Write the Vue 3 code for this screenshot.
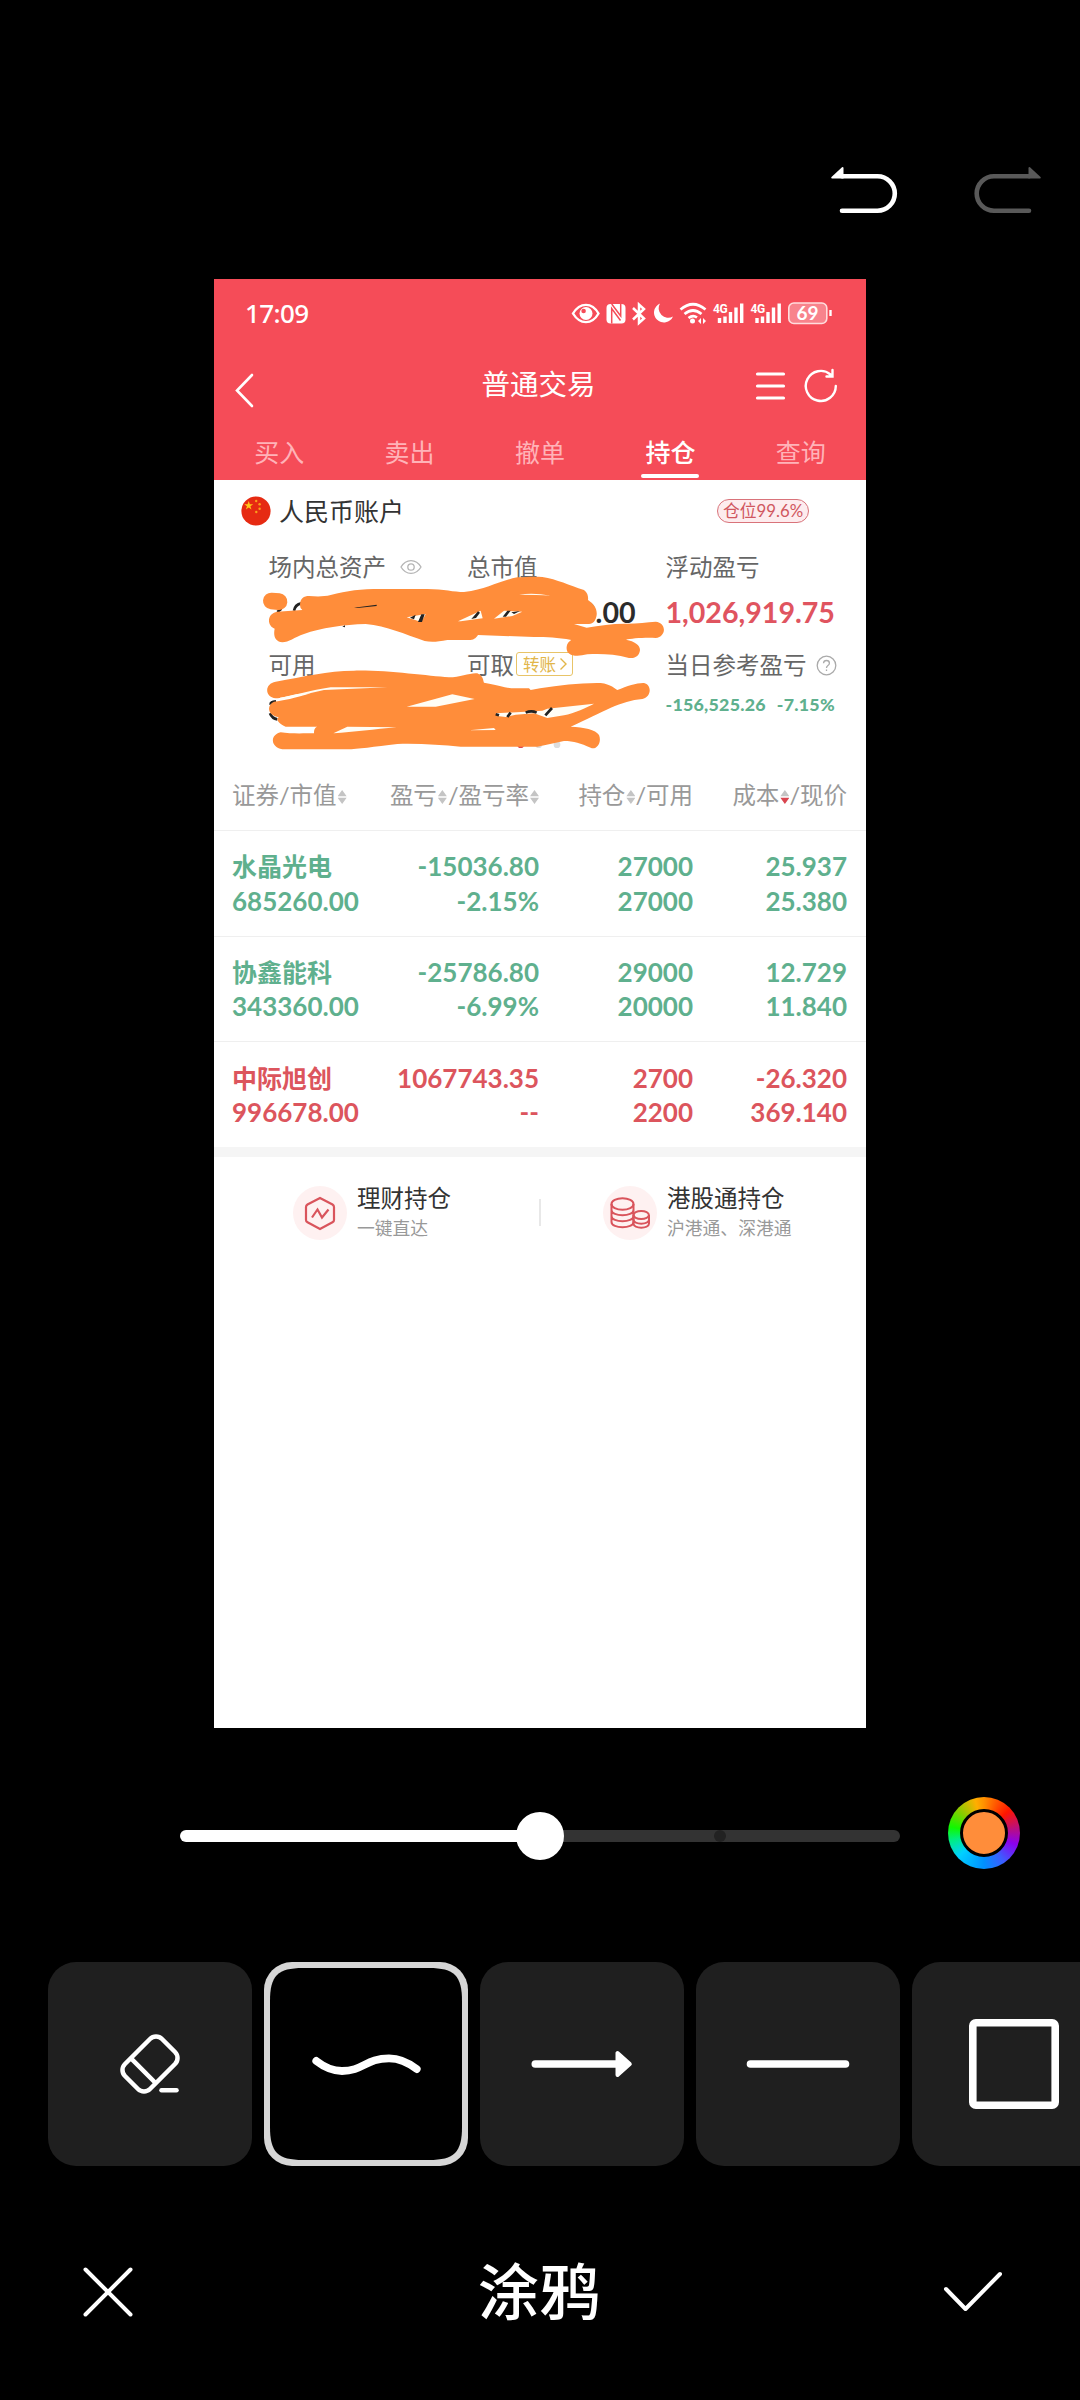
<script setup>
const tabs = ['买入', '卖出', '撤单', '持仓', '查询']
const holdings = [
  { tone: 'down', name: '水晶光电', value: '685260.00', pl: '-15036.80', rate: '-2.15%', qty: '27000', avail: '27000', cost: '25.937', price: '25.380' },
  { tone: 'down', name: '协鑫能科', value: '343360.00', pl: '-25786.80', rate: '-6.99%', qty: '29000', avail: '20000', cost: '12.729', price: '11.840' },
  { tone: 'up', name: '中际旭创', value: '996678.00', pl: '1067743.35', rate: '--', qty: '2700', avail: '2200', cost: '-26.320', price: '369.140' },
]
</script>

<template>
  <div class="editor">
    <div class="history">
      <svg class="undo" width="68" height="52" viewBox="0 0 68 52">
        <path d="M12 11.2H47.500A17.3 17.3 0 0 1 47.500 45.8H12" fill="none" stroke="#fff" stroke-width="4.6" stroke-linecap="round" />
        <path d="M1.5 12L12 2.2Q13.500 1.500 13.500 3.500V13.500H2Q0.500 13.200 1.500 12Z" fill="#fff" />
      </svg>
      <svg width="68" height="52" viewBox="0 0 68 52">
        <path d="M55 11.2H20A17.3 17.3 0 0 0 20 45.800H55" fill="none" stroke="#595959" stroke-width="4.600" stroke-linecap="round" />
        <path d="M66.500 12L56 2.200Q54.500 1.500 54.500 3.500V13.500H66Q67.500 13.200 66.500 12Z" fill="#595959" />
      </svg>
    </div>

    <div class="canvas">
      <header class="top">
        <div class="status">
          <span class="clock">17:09</span>
          <svg width="264" height="28" viewBox="570 300 264 28" fill="none" stroke="#fff" stroke-width="2">
            <path d="M573 313.500C580 302 592 302 598.500 313.500C592 325 580 325 573 313.500Z" stroke-width="2.400" />
            <circle cx="586" cy="313.500" r="6.500" fill="#fff" stroke="none" /><circle cx="583.600" cy="311" r="2.300" fill="#f54c58" stroke="none" />
            <rect x="606.500" y="304" width="19" height="19.500" rx="4" fill="#fff" stroke="none" />
            <path d="M611.700 323.500V308.500L620.500 320.500M611.700 304L620.700 316V304" stroke="#f54c58" stroke-width="1.500" />
            <path d="M633 308L644 318.500L639 323V304.500L644 309L633 319.500" stroke-width="2.500" />
            <path d="M660 303.500A9.900 9.900 0 1 0 673 316.500A9.500 9.500 0 0 1 660 303.500Z" fill="#fff" stroke="none" />
            <path d="M680.500 309.500Q693 299 705.500 309.500M684.500 314Q693 307 701.500 314M688.500 318Q693 314.500 697 317.500" stroke-width="2.700" />
            <circle cx="692.500" cy="321" r="2.500" fill="#fff" stroke="none" /><path d="M698 321L701 318V324ZM706 321L703 318V324Z" fill="#fff" stroke="none" />
            <g fill="#fff" stroke="none">
              <text x="713" y="312.500" class="net">4G</text><text x="750.500" y="312.500" class="net">4G</text>
            </g>
            <path d="M719.500 318V323M725 316.500V323M730.500 312V323M736 307.500V323M741.700 303.500V323M757 318V323M762.500 316.500V323M768 312V323M773.500 307.500V323M779.200 303.500V323" stroke-width="3.400" />
            <rect x="788.800" y="303" width="38" height="20.500" rx="5" fill="#f8838c" stroke="#fdd" stroke-width="1.600" />
            <path d="M830.500 310V316" stroke-width="2.400" />
            <text x="807.500" y="320" text-anchor="middle" class="batt">69</text>
          </svg>
        </div>
        <div class="nav">
          <svg class="back" width="22" height="36" viewBox="0 0 22 36"><path d="M18 2L3 17.500L18 33" fill="none" stroke="#fff" stroke-width="2.600" stroke-linecap="round" /></svg>
          <h1>普通交易</h1>
          <svg class="acts" width="86" height="38" viewBox="753 367 86 38" fill="none" stroke="#fff" stroke-linecap="round">
            <path d="M757.500 374H783.500M757.500 386H783.500M757.500 398H783.500" stroke-width="3.200" />
            <path d="M835.800 386A15 15 0 1 1 830.500 374.500M832.500 370V376.500H826.500" stroke-width="2.400" />
          </svg>
        </div>
        <nav class="tabs">
          <span v-for="(t, i) in tabs" :key="t" :class="{ on: i === 3 }">{{ t }}</span>
        </nav>
      </header>

      <section class="account">
        <div class="acct">
          <svg width="30" height="30" viewBox="0 0 30 30">
            <circle cx="15" cy="15" r="14.600" fill="#e62a12" />
            <path d="M7.700 5L8.800 8.300H12.200L9.400 10.300L10.500 13.500L7.700 11.500L4.900 13.500L6 10.300L3.200 8.300H6.600Z" fill="#ffc61a" />
            <g fill="#f9a01b"><circle cx="15.200" cy="5" r="1.200" /><circle cx="18.600" cy="8.300" r="1.200" /><circle cx="18.600" cy="12.700" r="1.200" /><circle cx="15.300" cy="16" r="1.200" /></g>
          </svg>
          <b>人民币账户</b>
          <span class="pill">仓位99.6%</span>
        </div>
        <div class="stats">
          <div class="cell">
            <div class="lab"><span>场内总资产</span>
              <svg class="eye" width="22" height="16" viewBox="0 0 22 16" fill="none" stroke="#b5b5b5" stroke-width="1.300"><path d="M1 8C6 -0.500 16 -0.500 21 8C16 16.500 6 16.500 1 8Z" /><circle cx="11" cy="8" r="3.200" /></svg>
            </div>
          </div>
          <div class="cell">
            <div class="lab"><span>总市值</span></div>
            <div class="num mv">0.00</div>
          </div>
          <div class="cell">
            <div class="lab"><span>浮动盈亏</span></div>
            <div class="num red">1,026,919.75</div>
          </div>
          <div class="cell"><div class="lab"><span>可用</span></div></div>
          <div class="cell">
            <div class="lab"><span>可取</span><span class="move">转账<svg width="9" height="14" viewBox="0 0 9 14"><path d="M1.500 1.500L7 7L1.500 12.500" fill="none" stroke="#e2b64a" stroke-width="1.400" /></svg></span></div>
          </div>
          <div class="cell">
            <div class="lab"><span>当日参考盈亏</span>
              <svg class="ask" width="21" height="21" viewBox="0 0 21 21" fill="none" stroke="#aaa" stroke-width="1.300"><circle cx="10.500" cy="10.500" r="9.300" /><path d="M7.500 8.300Q7.700 5.500 10.500 5.500T13.400 8.200Q13.400 9.500 11.900 10.500T10.500 13M10.500 14.500V16" /></svg>
            </div>
            <div class="day"><span>-156,525.26</span><span>-7.15%</span></div>
          </div>
        </div>
      </section>

      <section class="table">
        <div class="row head">
          <span>证券/市值<i class="sort"></i></span>
          <span>盈亏<i class="sort"></i>/盈亏率<i class="sort"></i></span>
          <span>持仓<i class="sort"></i>/可用</span>
          <span>成本<i class="sort hot"></i>/现价</span>
        </div>
        <div v-for="h in holdings" :key="h.name" class="row item" :class="h.tone">
          <span><em>{{ h.name }}</em><br>{{ h.value }}</span>
          <span>{{ h.pl }}<br>{{ h.rate }}</span>
          <span>{{ h.qty }}<br>{{ h.avail }}</span>
          <span>{{ h.cost }}<br>{{ h.price }}</span>
        </div>
      </section>

      <section class="links">
        <div class="link">
          <svg width="54" height="54" viewBox="0 0 54 54" fill="none" stroke="#d9545c" stroke-width="2.200">
            <circle cx="27" cy="27" r="27" fill="#fef1f1" stroke="none" />
            <path d="M27 12L39.500 18.500Q41 19.500 41 21V34Q41 35.500 39.500 36.300L27 43L14.500 36.300Q13 35.500 13 34V21Q13 19.500 14.500 18.500Z" />
            <path d="M19 31.500L24.500 23.500L29 31.500L35.500 23.500" />
          </svg>
          <div><b>理财持仓</b><small>一键直达</small></div>
        </div>
        <div class="link">
          <svg width="54" height="54" viewBox="0 0 54 54" fill="none" stroke="#d9545c" stroke-width="2">
            <circle cx="27" cy="27" r="27" fill="#fef1f1" stroke="none" />
            <path d="M8.500 18V36C8.500 43 30.500 43 30.500 36V18M8.500 24C8.500 31 30.500 31 30.500 24M8.500 30C8.500 37 30.500 37 30.500 30" /><ellipse cx="19.500" cy="18" rx="11" ry="5.800" />
            <path d="M30.500 29V37.500C30.500 43 46 43 46 37.500V29M30.500 33.500C30.500 39 46 39 46 33.500" /><ellipse cx="38.200" cy="29" rx="7.700" ry="4" />
          </svg>
          <div><b>港股通持仓</b><small>沪港通、深港通</small></div>
        </div>
      </section>

      <svg class="doodle" width="652" height="280" viewBox="0 0 1956 840">
        <circle cx="920" cy="794" r="10" fill="#e04650" /><circle cx="974" cy="794" r="10" fill="#ddd" /><circle cx="1029" cy="794" r="10" fill="#ddd" />
        <path d="M240 392Q243 374 262 370M190 396L202 386M186 664Q168 666 170 674M168 700Q174 716 190 718" fill="none" stroke="#222" stroke-width="8" />
        <g fill="#ff8d3a">
          <path d="M172 363L195 365" stroke="#ff8d3a" stroke-width="50" stroke-linecap="round" />
          <path d="M258 376C258 354 270 348 285 348C310 350 330 350 350 345C400 332 440 327 500 327H640C690 328 720 336 750 336C820 328 850 304 910 292C940 290 965 289 985 291C1030 298 1065 316 1110 330C1122 340 1123 350 1122 360C1140 372 1150 386 1148 405C1146 420 1138 432 1125 432H1080L1118 443C1160 436 1200 430 1240 431C1270 430 1300 427 1325 425C1358 428 1358 470 1325 474C1290 472 1250 476 1236 479C1262 484 1278 495 1278 510C1276 530 1260 536 1245 534C1200 522 1160 521 1120 523C1080 533 1055 525 1058 500C1060 488 1066 484 1072 480C1030 472 1000 471 960 471L792 465C785 476 778 480 765 480H700C670 486 650 487 632 483C570 462 520 438 455 432C390 434 320 444 270 462C240 472 225 487 205 487C185 485 177 470 182 446C158 438 158 400 190 395L265 390Q258 385 258 376Z" />
          <path d="M185 605C270 590 340 572 420 572C520 570 640 588 705 592C740 592 770 577 790 580C810 590 806 600 810 608C850 615 880 625 900 625H945L950 630L978 625C1040 615 1100 608 1160 609C1190 612 1205 628 1210 630C1240 618 1270 608 1290 609C1315 615 1312 652 1285 657C1220 662 1170 695 1070 740C1110 742 1145 748 1155 765C1165 790 1145 812 1130 803C1100 790 1080 783 1050 783L970 800H740C680 795 620 790 550 792C480 800 430 808 400 808H205C168 800 168 765 200 757C230 762 270 760 300 760C300 745 305 742 310 740H215C190 730 185 715 195 712C158 705 158 675 180 665C210 662 240 655 290 640L250 642C220 648 200 655 185 655C150 650 152 610 185 605Z" />
        </g>
        <g fill="#fffdf5">
          <path d="M198 660L330 630L520 622H350C290 630 240 648 198 653Z" />
          <path d="M578 680L715 643L782 657L665 680Z" />
          <path d="M358 760L400 740L548 742C480 748 420 756 358 760Z" />
          <path d="M578 412L635 402L622 426ZM732 424L800 392L806 415L740 424ZM840 416L870 392L925 395L895 408ZM915 344Q960 338 1010 347Q970 344 915 344ZM765 751L840 744L845 750ZM845 700L985 692L1000 686L1140 671C1120 682 1080 700 1050 706L1000 714L960 700L905 704L875 711L850 708ZM1068 738L1140 700Z" />
        </g>
        <g fill="#222"><path d="M420 383L488 374V378L430 384ZM588 413L605 404L600 418ZM612 426L622 403H632L624 426ZM772 417L792 394L798 398L786 414ZM866 410L880 392H890L876 410ZM892 397L918 393L900 402ZM385 440L393 436V442Z" /></g>
        <path d="M845 703L855 706M880 711L890 698M935 698Q952 690 968 698M994 706L1014 684" stroke="#222" stroke-width="8" fill="none" />
      </svg>
    </div>

    <div class="sizer">
      <div class="track"><div class="fill"></div><div class="knob"></div><div class="rest"><i></i></div></div>
      <div class="ring"><i></i></div>
    </div>

    <div class="tools">
      <div class="tool">
        <svg width="204" height="204" viewBox="0 0 204 204" fill="none" stroke="#fff" stroke-width="4.500">
          <g transform="translate(102 102) rotate(-45)"><rect x="-26.200" y="-17.700" width="52.400" height="35.400" rx="8.500" /><path d="M-9.500 -17.700V17.700" /></g>
          <path d="M113.500 128.300H128.500" stroke-linecap="round" />
        </svg>
      </div>
      <div class="tool active">
        <svg width="204" height="204" viewBox="0 0 204 204" fill="none">
          <path d="M6 39C6 13.700 13.700 6 39 6H165C190.300 6 198 13.700 198 39V165C198 190.300 190.300 198 165 198H39C13.700 198 6 190.300 6 165Z" fill="#000" />
          <path d="M52.300 99C60 105 68 109 78 109C99 109 102 96.300 125 96.300C137 96.300 145 101 152.700 107" stroke="#fff" stroke-width="7.800" stroke-linecap="round" />
        </svg>
      </div>
      <div class="tool">
        <svg width="204" height="204" viewBox="0 0 204 204">
          <path d="M55.300 102H140" stroke="#fff" stroke-width="7.600" stroke-linecap="round" />
          <path d="M137.500 91V113L149.800 102Z" fill="#fff" stroke="#fff" stroke-width="4" stroke-linejoin="round" />
        </svg>
      </div>
      <div class="tool">
        <svg width="204" height="204" viewBox="0 0 204 204"><path d="M54.500 102H149.500" stroke="#fff" stroke-width="7.600" stroke-linecap="round" /></svg>
      </div>
      <div class="tool">
        <svg width="204" height="204" viewBox="0 0 204 204"><rect x="60.800" y="60.800" width="82.400" height="82.400" rx="3" fill="none" stroke="#fff" stroke-width="7.600" /></svg>
      </div>
    </div>

    <footer class="bar">
      <svg width="52" height="52" viewBox="82 2266 52 52"><path d="M85.500 2269.500L130.500 2314.500M130.500 2269.500L85.500 2314.500" stroke="#fff" stroke-width="4" stroke-linecap="round" /></svg>
      <h2>涂鸦</h2>
      <svg width="60" height="52" viewBox="943 2266 60 52"><path d="M946 2289L965.500 2309L1000 2274" fill="none" stroke="#fff" stroke-width="4" stroke-linecap="round" stroke-linejoin="round" /></svg>
    </footer>
  </div>
</template>

<style>
body { background: #000; }
</style>

<style scoped>
* { box-sizing: border-box; }
svg { display: block; flex: none; }
.editor { width: 1080px; height: 2400px; overflow: hidden; background: #000; font-family: Lato, "Noto Sans CJK SC", sans-serif; display: flex; flex-direction: column; }
.history { height: 279px; padding: 165px 38px 0 0; display: flex; justify-content: flex-end; gap: 76px; }
.canvas { position: relative; width: 652px; height: 1449px; margin-left: 214px; background: #fff; }
.top { height: 201px; background: #f54c58; color: #fff; }
.status { height: 70px; padding: 0 32px 0 31px; display: flex; align-items: center; justify-content: space-between; }
.clock { font-size: 26px; font-weight: 500; line-height: 36px; margin-top: -2px; font-family: "Noto Sans", sans-serif; letter-spacing: -.6px; }
.net { font: 700 12px Roboto, sans-serif; letter-spacing: -.5px; }
.batt { font: 700 19px Lato, sans-serif; fill: #fff; stroke: none; }
.nav { height: 73px; padding: 0 27px 0 20px; display: flex; align-items: center; justify-content: space-between; }
.back { position: relative; top: 5px; }
h1 { margin: -3px 0 0; padding-left: 68px; font-size: 28.5px; font-weight: 400; line-height: 40px; }
.tabs { height: 58px; display: flex; }
.tabs span { flex: 1; text-align: center; font-size: 25px; line-height: 60px; color: #ffb3b8; }
.tabs .on { color: #fff; font-weight: 500; }
.tabs .on::after { content: ""; display: block; width: 58px; height: 4px; margin: -8px auto 0; border-radius: 2px; background: #fff; }
.account { height: 278px; }
.acct { height: 61px; padding: 0 57px 0 27px; display: flex; align-items: center; }
.acct b { flex: 1; margin: -2px 0 0 8px; font-size: 25px; font-weight: 400; color: #333; }
.pill { width: 92px; height: 24px; border: 1.500px solid #d9737a; border-radius: 12px; background: #fdecee; color: #d0575f; font-size: 16.800px; line-height: 21px; text-align: center; white-space: nowrap; }
.stats { padding: 8px 0 0 54.500px; display: grid; grid-template-columns: 198.500px 198.500px 200px; grid-template-rows: 98px 80px; }
.lab { height: 36px; display: flex; align-items: center; font-size: 23.500px; color: #666; white-space: nowrap; }
.lab > span:first-child { margin-top: -3px; }
.eye { margin-left: 14px; }
.ask { margin-left: 9px; }
.num { margin-top: 10px; height: 34px; font-size: 28.600px; font-weight: 700; line-height: 34px; color: #2b2b2b; }
.mv { padding-left: 112px; }
.red { color: #e0545f; }
.move { display: flex; align-items: center; gap: 3px; height: 24px; width: 57px; margin: -2px 0 0 2px; padding-left: 6px; border: 1.500px solid #e8c468; border-radius: 3px; color: #e2b64a; font-size: 16.500px; }
.day { display: flex; gap: 11px; padding-top: 9px; font-size: 17.800px; letter-spacing: .25px; line-height: 24px; font-weight: 900; color: #5fb08e; }
.row { display: grid; grid-template-columns: 156px 151px 154px 154px; padding: 0 18px; border-bottom: 1.500px solid #efefef; }
.row span { text-align: right; white-space: nowrap; }
.row span:first-child { text-align: left; }
.head { height: 73px; align-items: center; font-size: 23.500px; color: #999; }
.sort { display: inline-block; width: 9px; height: 14px; margin: 0 1px; background: #c4c4c4; clip-path: polygon(50% 0, 100% 44%, 0 44%, 0 56%, 100% 56%, 50% 100%, 0 56%, 0 44%); }
.row span > .sort:last-child { margin-right: 0; }
.hot { background: linear-gradient(#c4c4c4 50%, #d94550 50%); }
.item { height: 105.500px; padding-top: 1px; align-items: center; font-size: 26px; line-height: 34.500px; font-weight: 700; }
.item:last-child { height: 105px; border-bottom: 0; }
.item em { font-style: normal; font-size: 25px; }
.down { color: #5fb08e; }
.up { color: #dc555d; }
.links { height: 104px; border-top: 10px solid #f5f5f5; display: flex; padding-top: 9px; position: relative; }
.links::after { content: ""; position: absolute; left: 325px; top: 42px; width: 1.500px; height: 27px; background: #e8e8e8; }
.link { width: 310px; margin-left: 79px; display: flex; align-items: center; gap: 10px; height: 94px; }
.link + .link { margin-left: 0; width: 263px; }
.link:first-child { width: 310px; flex: none; }
.link b { display: block; font-size: 23.500px; line-height: 30px; font-weight: 400; color: #333; }
.link small { display: block; font-size: 17.800px; line-height: 30px; color: #999; }
.doodle { position: absolute; left: 0; top: 201px; }
.sizer { height: 234px; padding: 69px 60px 0 180px; display: flex; justify-content: space-between; }
.track { width: 720px; height: 12px; margin-top: 33px; display: flex; align-items: center; }
.fill { flex: 1; height: 12px; border-radius: 6px 0 0 6px; background: #fff; }
.knob { width: 48px; height: 48px; margin: 0 -24px; border-radius: 50%; background: #fff; z-index: 1; }
.rest { flex: 1; height: 12px; border-radius: 0 6px 6px 0; background: #333; display: flex; justify-content: center; }
.rest i { width: 12px; height: 12px; border-radius: 50%; background: #222; }
.ring { width: 72px; height: 72px; border-radius: 50%; display: flex; align-items: center; justify-content: center; background: conic-gradient(#ff9000 0deg, #ff1500 48deg, #c01070 78deg, #8a00f0 110deg, #3d5cff 145deg, #0090ff 180deg, #00d0ff 228deg, #00ee80 258deg, #10f800 280deg, #88cc00 312deg, #ffae00 345deg, #ff9000 360deg); }
.ring i { width: 48px; height: 48px; border: 3px solid #000; border-radius: 50%; background: #ff8d3a; }
.tools { padding-left: 48px; display: flex; gap: 12px; }
.tool { flex: none; width: 204px; height: 204px; border-radius: 28px; background: #1f1f1f; overflow: hidden; }
.active { background: #d6d6d6; }
.bar { height: 234px; padding: 18px 77px 0 82px; display: flex; align-items: center; justify-content: space-between; }
h2 { margin: 0; padding-left: 1px; font-size: 61px; font-weight: 500; line-height: 80px; color: #fff; }
</style>
